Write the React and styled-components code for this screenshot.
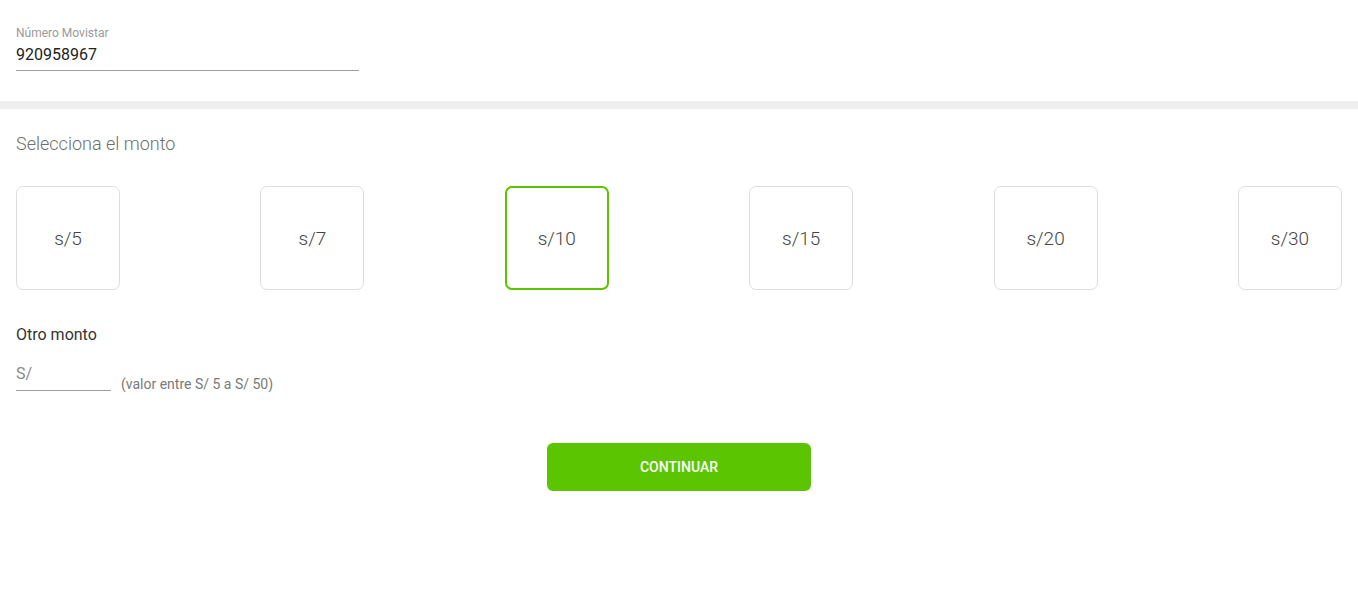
import React, { useState } from "react";
import styled, { createGlobalStyle } from "styled-components";

const GlobalStyle = createGlobalStyle`
  body {
    margin: 0;
    background: #fff;
    font-family: Roboto, "Liberation Sans", sans-serif;
  }
`;

const Page = styled.div`
  width: 100%;
`;

const Section = styled.section`
  padding: ${props => props.padding || "0 16px"};
`;

const FieldLabel = styled.div`
  font-size: 12px;
  color: #9a9a9a;
  line-height: 14px;
`;

const FieldValue = styled.div`
  width: 343px;
  font-size: 16px;
  color: #222;
  line-height: 22px;
  padding: 4px 0 4px;
  border-bottom: 1px solid #9e9e9e;
`;

const Divider = styled.div`
  height: 8px;
  background: #eeeeee;
  margin-top: 30px;
`;

const Title = styled.h2`
  margin: 0;
  font-size: 18px;
  font-weight: 300;
  color: #6e6e6e;
  line-height: 20px;
`;

const AmountRow = styled.div`
  display: flex;
  justify-content: space-between;
  margin-top: 32px;
`;

const AmountBox = styled.button`
  width: 104px;
  height: 104px;
  box-sizing: border-box;
  background: #fff;
  border: ${props => (props.selected ? "2px solid #5bc500" : "1px solid #dedede")};
  border-radius: 7px;
  font-family: inherit;
  font-size: 19px;
  font-weight: 300;
  color: #444;
  display: flex;
  align-items: center;
  justify-content: center;
  cursor: pointer;
  padding: 0;
`;

const SubTitle = styled.div`
  margin-top: 36px;
  font-size: 16px;
  color: #333;
  line-height: 18px;
`;

const OtherRow = styled.div`
  display: flex;
  align-items: flex-end;
  gap: 10px;
  margin-top: 20px;
`;

const SmallInput = styled.div`
  width: 95px;
  font-size: 16px;
  color: #8a8a8a;
  line-height: 20px;
  padding-bottom: 6px;
  border-bottom: 1px solid #9e9e9e;
`;

const Hint = styled.span`
  font-size: 14px;
  color: #7a7a7a;
  line-height: 14px;
`;

const ButtonRow = styled.div`
  display: flex;
  justify-content: center;
  margin-top: 52px;
`;

const PrimaryButton = styled.button`
  width: 264px;
  height: 48px;
  border: none;
  border-radius: 6px;
  background: #5ac500;
  color: #fff;
  font-family: inherit;
  font-size: 14px;
  font-weight: 500;
  cursor: pointer;
`;

const amounts = [5, 7, 10, 15, 20, 30];

const App = () => {
  const [selected, setSelected] = useState(10);

  return (
    <Page>
      <GlobalStyle />
      <Section padding="26px 16px 0">
        <FieldLabel>Número Movistar</FieldLabel>
        <FieldValue>920958967</FieldValue>
      </Section>
      <Divider />
      <Section padding="25px 16px 0">
        <Title>Selecciona el monto</Title>
        <AmountRow>
          {amounts.map(a => (
            <AmountBox key={a} selected={a === selected} onClick={() => setSelected(a)}>
              s/{a}
            </AmountBox>
          ))}
        </AmountRow>
        <SubTitle>Otro monto</SubTitle>
        <OtherRow>
          <SmallInput>S/</SmallInput>
          <Hint>(valor entre S/ 5 a S/ 50)</Hint>
        </OtherRow>
        <ButtonRow>
          <PrimaryButton>CONTINUAR</PrimaryButton>
        </ButtonRow>
      </Section>
    </Page>
  );
};

export default App;
